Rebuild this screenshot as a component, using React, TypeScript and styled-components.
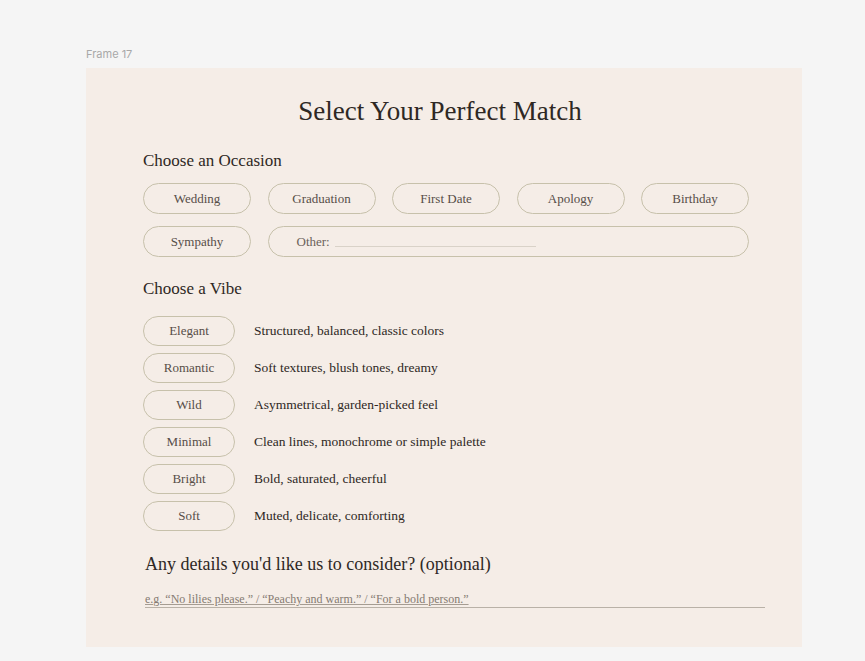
import * as React from 'react'
import styled, { createGlobalStyle } from 'styled-components'

const GlobalStyle = createGlobalStyle`
  html, body {
    margin: 0;
    padding: 0;
    background: #f5f5f5;
  }
  * {
    box-sizing: border-box;
  }
`

const Page = styled.div`
  padding: 46px 0 0 86px;
  width: 865px;
  height: 661px;
`
const FrameLabel = styled.div`
  font-family: Inter, 'Liberation Sans', sans-serif;
  font-size: 11px;
  line-height: 16px;
  color: #a8a8a8;
  margin-bottom: 6px;
`
const Frame = styled.div`
  width: 716px;
  height: 579px;
  background: #f5ede7;
  padding: 26px 53px 0 57px;
  font-family: 'Liberation Serif', 'DejaVu Serif', serif;
  color: #2e2a27;
`
const Title = styled.h1`
  margin: 0 0 21px;
  padding-right: 12px;
  font-weight: 400;
  font-size: 27px;
  line-height: 34px;
  text-align: center;
  color: #2e2824;
`
const SectionTitle = styled.h2<{ $gap?: number; $size?: number }>`
  margin: 0 0 ${p => p.$gap ?? 10}px;
  font-weight: 400;
  font-size: ${p => p.$size || 17}px;
  line-height: 24px;
  color: #2e2824;
`
const PillGrid = styled.div`
  display: grid;
  grid-template-columns: repeat(5, 108px);
  column-gap: 16.5px;
  row-gap: 12px;
  margin-bottom: 20px;
`
const Pill = styled.div<{ $w?: number; $h?: number }>`
  height: ${p => p.$h || 31}px;
  width: ${p => p.$w || 108}px;
  border: 1.5px solid #c7c1ab;
  border-radius: 16px;
  display: flex;
  align-items: center;
  justify-content: center;
  font-size: 13px;
  color: #574e47;
  flex-shrink: 0;
`
const OtherPill = styled.div`
  grid-column: 2 / span 4;
  height: 31px;
  border: 1.5px solid #c7c1ab;
  border-radius: 16px;
  display: flex;
  align-items: center;
  padding-left: 28px;
  font-size: 13px;
  color: #6b625a;
`
const OtherLine = styled.div`
  width: 201px;
  height: 1px;
  margin: 10px 0 0 5px;
  background: #d9d2c8;
`
const VibeList = styled.div`
  display: flex;
  flex-direction: column;
  gap: 7px;
  margin-top: 15px;
  margin-bottom: 21px;
`
const VibeRow = styled.div`
  display: flex;
  align-items: center;
  gap: 19px;
`
const VibeText = styled.div`
  font-size: 13.5px;
  color: #2e2824;
`
const Details = styled.div`
  padding-left: 2px;
  width: 622px;
`
const DetailsInput = styled.div`
  margin-top: 16px;
  border-bottom: 1px solid #b9b1a7;
  padding-bottom: 1px;
  font-size: 12px;
  line-height: 14px;
  color: #857b72;
  text-decoration: underline;
  text-decoration-color: #a59c92;
`

const occasions = ['Wedding', 'Graduation', 'First Date', 'Apology', 'Birthday']

const vibes = [
  ['Elegant', 'Structured, balanced, classic colors'],
  ['Romantic', 'Soft textures, blush tones, dreamy'],
  ['Wild', 'Asymmetrical, garden-picked feel'],
  ['Minimal', 'Clean lines, monochrome or simple palette'],
  ['Bright', 'Bold, saturated, cheerful'],
  ['Soft', 'Muted, delicate, comforting'],
]

export default function App() {
  return (
    <Page>
      <GlobalStyle />
      <FrameLabel>Frame 17</FrameLabel>
      <Frame>
        <Title>Select Your Perfect Match</Title>

        <SectionTitle>Choose an Occasion</SectionTitle>
        <PillGrid>
          {occasions.map(o => <Pill key={o}>{o}</Pill>)}
          <Pill>Sympathy</Pill>
          <OtherPill>
            Other:
            <OtherLine />
          </OtherPill>
        </PillGrid>

        <SectionTitle $gap={0}>Choose a Vibe</SectionTitle>
        <VibeList>
          {vibes.map(([name, text]) => (
            <VibeRow key={name}>
              <Pill $w={92} $h={30}>{name}</Pill>
              <VibeText>{text}</VibeText>
            </VibeRow>
          ))}
        </VibeList>

        <Details>
          <SectionTitle $size={18} $gap={0}>Any details you'd like us to consider? (optional)</SectionTitle>
          <DetailsInput>e.g. “No lilies please.” / “Peachy and warm.” / “For a bold person.”</DetailsInput>
        </Details>
      </Frame>
    </Page>
  )
}
